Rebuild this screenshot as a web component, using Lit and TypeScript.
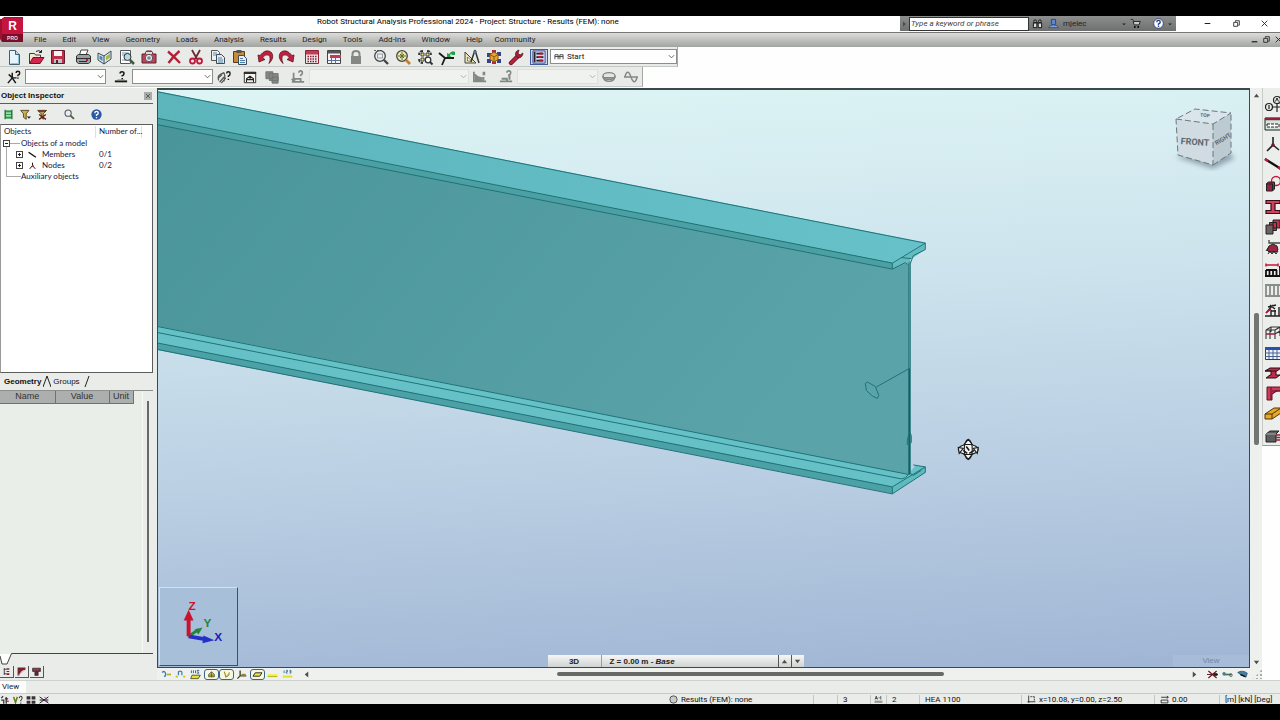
import { LitElement, html, svg, css, nothing } from "lit";
import { customElement, property } from "lit/decorators.js";

const K = "#1a1a1a";
const R = "#c2183c";
const G = "#838785";

const ICONS: Record<string, unknown> = {
  new: svg`<path d="M3.5 1.5h6l4 4v10h-10z" fill="#e6f4fb" stroke="#44606e"/><path d="M9.5 1.5v4h4" fill="#b9d9e8" stroke="#44606e"/><path d="M12.5 6v8.500h-8" stroke="#8fc0da" fill="none"/>`,
  open: svg`<path d="M1.500 4.500h5l1 1.500h5v8h-11z" fill="#f4ead0" stroke="#5c3030"/><path d="M1.500 14.500l3.500-6h11l-4 6z" fill="#d3264c" stroke="#70142a"/><path d="M8 2.500q3-2 5.500.5m0-2v2.500h-2.500" fill="none" stroke="#222"/>`,
  save: svg`<path d="M1.500 1.500h13v13h-13z" fill="#c0304c" stroke="#5e1c2c"/><path d="M4 2h8v5h-8z" fill="#f4f4f2"/><path d="M4 10h8v4h-8z" fill="#b9c4c8"/><path d="M6 11h2v3h-2z" fill="#5e1c2c"/>`,
  print: svg`<path d="M4.500 6l1.500-5h7l-2 5z" fill="#fff" stroke="#444"/><path d="M1.500 7l2-1.500h10l2 1.500v6l-2 1.500h-10l-2-1.500z" fill="#97a0a2" stroke="#333"/><path d="M2 9.500h13M4 12.500h8" stroke="#38292f"/><path d="M11 11h2" stroke="${R}" stroke-width="2"/>`,
  book: svg`<path d="M1 4l6 3 7-5v8l-7 5-6-4z" fill="#d9e7ee" stroke="#3a4a56"/><path d="M7 7v8" stroke="#3a4a56"/><path d="M2.500 6.500l3 1.500v4l-3-2z" fill="#4c86b4"/><path d="M9 7.500l4-3v4l-4 3z" fill="#a5b944"/>`,
  preview: svg`<path d="M1.500 1.500h10v13h-10z" fill="#fff" stroke="#555"/><path d="M3 4h7M3 6h3M3 11h4" stroke="#6b93b1"/><circle cx="8.500" cy="8" r="3.500" fill="#b7dbe0" stroke="#333"/><path d="M11 11l4 4" stroke="#3e5a3a" stroke-width="2.500"/>`,
  camera: svg`<path d="M1 5h3l1.500-3h5l1.500 3h3v9h-14z" fill="#bf4258" stroke="#5b2430"/><path d="M5 3h6v2h-6z" fill="#ddd"/><circle cx="8" cy="9" r="3.700" fill="#e5e9ec" stroke="#555"/><circle cx="8" cy="9" r="1.800" fill="#6b8799"/>`,
  cross: svg`<path d="M2 2.500q6 5 12 11.500M13.500 2q-6 5-11 12" stroke="#b51f38" stroke-width="2.300" fill="none"/>`,
  cut: svg`<path d="M4 1l5 9M12 1l-5 9" stroke="#6b2a34" stroke-width="1.800"/><circle cx="4.500" cy="12" r="2.500" fill="none" stroke="${R}" stroke-width="1.800"/><circle cx="11.500" cy="12" r="2.500" fill="none" stroke="${R}" stroke-width="1.800"/>`,
  copy: svg`<path d="M1.500 1.500h6l2 2v8h-8z" fill="#eef2f3" stroke="#555"/><path d="M6.500 5.500h5l3 3v6h-8z" fill="#dfe9ee" stroke="#3b4d5a"/><path d="M8 9h4M8 11h5M8 13h5M3 4h4M3 6h3" stroke="#5d87a8"/>`,
  paste: svg`<path d="M1.500 2.500h11v11h-11z" fill="#c88a35" stroke="#5a3d14"/><path d="M4.500 1h5v3h-5z" fill="#555"/><path d="M6.500 6.500h5l3 3v6h-8z" fill="#e6eef2" stroke="#3b4d5a"/><path d="M8 9.500h3M8 11.500h5M8 13.500h5" stroke="#4f7fa8"/>`,
  undo: svg`<path d="M1 6l1 7 6-2.500-2.500-1.500q2.500-4.500 6-3 3 2 .5 8.500 6-6 2.500-11-5.500-4.500-11.500 3z" fill="#c3203f" stroke="#5e1424" stroke-width=".8"/>`,
  redo: svg`<path d="M15 6l-1 7-6-2.500 2.500-1.500q-2.500-4.500-6-3-3 2-.5 8.500-6-6-2.500-11 5.500-4.500 11.500 3z" fill="#c3203f" stroke="#5e1424" stroke-width=".8"/>`,
  calc: svg`<path d="M1.500 1.500h13v13h-13z" fill="#f0e4e6" stroke="#8e2338"/><path d="M2 2h12v3.500h-12z" fill="#c23a54"/><path d="M3.500 7.500h9M3.500 10h9M3.500 12.500h9" stroke="#7b2233" stroke-width="1.500" stroke-dasharray="1.500 1"/>`,
  calctable: svg`<path d="M1.500 1.500h13v13h-13z" fill="#f5f5f5" stroke="#444"/><path d="M2 2h12v2.500h-12z" fill="#555"/><path d="M4 6h11v3h-11z" fill="#c23a54"/><path d="M2 11.500h12M5.500 9v5.500M9.500 9v5.500" stroke="#5d6c98"/>`,
  lock: svg`<path d="M4.500 8v-3q0-3 3.500-3t3.500 3v3" fill="none" stroke="${G}" stroke-width="2"/><path d="M3 7h10v8h-10z" fill="${G}"/>`,
  zoomwin: svg`<path d="M1 1.500h9" stroke="#666" stroke-dasharray="2 1"/><circle cx="7" cy="7" r="5.300" fill="#e8f1f3" stroke="#444" stroke-width="1.300"/><path d="M4.500 5h5v4h-5z" fill="none" stroke="#999"/><path d="M11 11l4 4" stroke="#444" stroke-width="2.400"/>`,
  zoomall: svg`<circle cx="7" cy="7" r="5.300" fill="#efeab0" stroke="#444" stroke-width="1.300"/><path d="M7 3v8M3 7h8M5 5l4 4M9 5l-4 4" stroke="#5b6a2c"/><path d="M11 11l4 4" stroke="#c97c28" stroke-width="2.600"/>`,
  zoomlayout: svg`<path d="M6 2q-4 0-4 4M10 2q4 0 4 4M2 10q0 4 4 4" fill="none" stroke="#333" stroke-width="1.800" stroke-dasharray="3 1"/><path d="M4 4h3v3h-3zM9 4h3v3h-3zM4 9h3v3h-3z" fill="#e6dd7c" stroke="#444"/><circle cx="11" cy="11" r="2.800" fill="#fff" stroke="#333" stroke-width="1.300"/><path d="M13 13l2.500 2.500" stroke="#333" stroke-width="2"/>`,
  rotate: svg`<path d="M0 4l6 5h9M6 9l-3 7M6 9" stroke="${K}" stroke-width="1.800" fill="none"/><path d="M8 8V4l2 1q3-4 6-2v-2v5h-4l1.500-1q-2-.5-2.500 1l1 2z" fill="#25a046"/>`,
  design: svg`<path d="M1 3v11h11z" fill="#ece5ad" stroke="#444"/><path d="M3.500 8v4h4z" fill="#fff" stroke="#666" stroke-width=".8"/><path d="M11 1l-4 12M11 1l4 13" stroke="#333" stroke-width="1.500"/><circle cx="11" cy="3" r="1.700" fill="#59748a"/>`,
  cube: svg`<path d="M1 4h4v4h-4zM11 3h4v4h-4zM1 10h4v4h-4zM11 10h4v4h-4z" fill="#34428c"/><path d="M6 1h4v3h-4zM6 12h4v3h-4z" fill="#b02a40"/><path d="M8 3l4 2.500v5l-4 2.500-4-2.500v-5z" fill="#e8a52c" stroke="#8a5b1b"/><path d="M4 5.500l4 2.500 4-2.500M8 8v5" stroke="#8a5b1b" fill="none"/>`,
  wrench: svg`<path d="M3 14l7-7" stroke="#6d1426" stroke-width="4.400" stroke-linecap="round"/><path d="M3 14l7-7" stroke="#b7233f" stroke-width="2.800" stroke-linecap="round"/><path d="M15 4l-3 2-2-1.500 1-3.500q-4 1-3.500 5l2.500 3q4.500 0 5-5z" fill="#a5203a" stroke="#5a1020" stroke-width=".7"/>`,
  tree: svg`<path d="M3 2v12M5 4h8M5 8h8M5 12h8" stroke="#222" stroke-width="2"/><path d="M9 4h3M7 8h4M9 12h3" stroke="${R}" stroke-width="2.500"/><path d="M1 1h14v14H1z" fill="none" stroke="#33418d"/>`,
  nodeq: svg`<path d="M2 5l4 4h5M6 9l-5 6M6 9v-6M6 9l4 6" stroke="${K}" stroke-width="1.700" fill="none"/><path d="M10.500 3.500q0-2 2-2t2 2-2 2.500v1M12.500 8.500v1.500" stroke="${K}" stroke-width="1.700" fill="none"/>`,
  barq: svg`<path d="M1 13h14" stroke="${K}" stroke-width="2.200"/><path d="M4 11h8" stroke="#bfa545"/><path d="M7 4q0-2 2.200-2t2.200 2-2 2.500v1M9.400 9v1.500" stroke="${K}" stroke-width="1.800" fill="none"/>`,
  handq: svg`<path d="M2 12q-2-5 2-7l4-2M3 14l5-6M5 15l5-6M2 9l4-4M8 3l1 4-1 6" stroke="#555" stroke-width="1.400" fill="none"/><path d="M11 4q0-2 2-2t2 2-2 3v1M13 10v1.500" stroke="${K}" stroke-width="1.600" fill="none"/>`,
  loadwin: svg`<path d="M1.500 2.500h13v12h-13z" fill="#f7f5ee" stroke="#222"/><path d="M1 3.500h14" stroke="#222" stroke-width="2"/><path d="M4 14v-4l4-3 4 3v4M4 11h8M8 7v4" fill="none" stroke="#222" stroke-width="1.200"/>`,
  layers: svg`<path d="M1 2h8v8h-8zM5 4h10v8h-10zM8 8h7v7h-7z" fill="${G}" stroke="#6f7372"/>`,
  loadq: svg`<path d="M1 13.500h14M3 3v10M3 10h8v3M1 10l2 3 2-3" stroke="${G}" stroke-width="2" fill="none"/><path d="M9 3q0-2 2-2t2 2-2 3v1" stroke="${G}" stroke-width="1.800" fill="none"/>`,
  diag: svg`<path d="M1 2v11h14M2 5q4 5 10 4v4" stroke="${G}" stroke-width="2" fill="none"/><path d="M2 6q4 4 9 4v3h-9zM11 2h3v4h-3z" fill="${G}"/>`,
  diag2: svg`<path d="M1 13h14M3 10h6v3M12 6v5" stroke="${G}" stroke-width="2.200" fill="none"/><path d="M9 3q0-2 2.200-2t2.200 2-2 2.500v2" stroke="${G}" stroke-width="1.800" fill="none"/>`,
  bowl: svg`<ellipse cx="8" cy="7" rx="7" ry="4" fill="#e2e5e2" stroke="${G}" stroke-width="1.600"/><path d="M1 7q1 6 7 6t7-6" fill="none" stroke="${G}" stroke-width="1.600"/><path d="M2 9h12" stroke="${G}" stroke-width="2"/>`,
  wave: svg`<path d="M0 8h16M1 8q3-11 7 0t7 0" stroke="${G}" stroke-width="1.700" fill="none"/>`,
  bino: svg`<path d="M3 3h3v4h-3zM10 3h3v4h-3zM2 7h5v7h-5zM9 7h5v7h-5zM7 7h2" fill="#ddd" stroke="#111" stroke-width="1.400"/>`,
  user: svg`<path d="M5 2h6v6l-1 2h-4l-1-2z" fill="#5f86c8" stroke="#1f3f8f" stroke-width="1.300"/><path d="M1 14q1-4 7-4t7 4z" fill="#7fa0d8" stroke="#1f3f8f"/>`,
  cart: svg`<path d="M1 2h3l2 8h7l2-5h-10" fill="#c9c9c9" stroke="#222" stroke-width="1.400"/><circle cx="7" cy="13" r="1.400"/><circle cx="12" cy="13" r="1.400"/>`,
  help: svg`<circle cx="8" cy="8" r="7" fill="#fff" stroke="#26366a" stroke-width="1.200"/><path d="M5.500 6q0-2.500 2.500-2.500t2.500 2.200-2.500 2.800v1.500M8 11v2" fill="none" stroke="#24408c" stroke-width="2"/>`,
  helpblue: svg`<circle cx="8" cy="8" r="7.500" fill="#2b57a4"/><path d="M5.500 6q0-2.500 2.500-2.500t2.500 2.200-2.500 2.800v1.500M8 11.500v2" fill="none" stroke="#fff" stroke-width="2"/>`,
  filterdoc: svg`<path d="M3 2h10v12h-10z" fill="#27984a"/><path d="M4 6h8M4 10h8" stroke="#d9f2d9" stroke-width="1.500"/><path d="M3 1v14M13 1v14" stroke="#145f2c" stroke-width="1.500"/>`,
  funnel: svg`<path d="M1 2h12l-4 5v8l-4-3v-5z" fill="#c8b24a" stroke="#50401a" stroke-width="1.300"/><path d="M10 11h6l-3 3z" fill="#222"/>`,
  funnelx: svg`<path d="M1 2h13l-5 5v8l-3-3v-5z" fill="#b9a34a" stroke="#50401a" stroke-width="1.300"/><path d="M3 8l10 7M13 8l-10 7M2 3h11" stroke="#6b2020" stroke-width="2"/>`,
  find: svg`<circle cx="6" cy="6" r="4.500" fill="#e3eff3" stroke="#556" stroke-width="1.600"/><path d="M9.500 9.500l5 5" stroke="#555c38" stroke-width="2.600"/>`,
  member: svg`<path d="M1 4l13 9" stroke="#111" stroke-width="2.400"/>`,
  node: svg`<path d="M8 3v5l-5 6M8 8l5 6" stroke="#111" stroke-width="1.700" fill="none"/><path d="M7 7h3v3h-3z" fill="${R}"/>`,
  axes: svg`<circle cx="4" cy="11" r="3.500" fill="none" stroke="#222" stroke-width="1.200"/><path d="M4 9v4M7.500 11h9M12 7v9" stroke="#222" stroke-width="1.200"/><circle cx="12" cy="4" r="3.500" fill="none" stroke="#222" stroke-width="1.200"/><path d="M10.500 5.500l1.500-3.500 1.500 3.500" stroke="#222" fill="none"/>`,
  storeys: svg`<path d="M0 2h16v12h-16z" fill="#cfe9de" stroke="#222"/><path d="M0 3h16" stroke="#8e1f3d" stroke-width="2.500"/><path d="M2 8h12v3h-12z" fill="#fff" stroke="#222" stroke-dasharray="3 1"/>`,
  vnode: svg`<path d="M8 1v8l-6 6M8 9l6 5" stroke="#222" stroke-width="1.600" fill="none"/><circle cx="8" cy="9" r="1.800" fill="#6e1830"/>`,
  vbar: svg`<path d="M0 3l16 10" stroke="#111" stroke-width="2.200"/><path d="M0 3l3 2M13 11l3 2" stroke="${R}" stroke-width="2.500"/>`,
  solid: svg`<circle cx="11" cy="5" r="4.500" fill="none" stroke="${R}" stroke-width="1.300"/><path d="M1.500 7.500l2-1.500h6v7l-2 2h-6z" fill="#99223e" stroke="#222"/><path d="M1.500 8h6v7" stroke="#222" fill="none"/>`,
  section: svg`<path d="M1 1.500h14v3h-5v7h5v3h-14v-3h5v-7h-5z" fill="#d2405c" stroke="#331018" stroke-width="1.200"/>`,
  panels: svg`<path d="M8 1h7v8h-7zM4.500 3.500h7v8h-7z" fill="#c2304d" stroke="#222"/><path d="M1 6h7v9h-7z" fill="#6b6263" stroke="#222"/>`,
  support: svg`<path d="M4 1v3h12" stroke="#444" fill="none" stroke-width="1.300"/><path d="M8 5l4 2 1 4-2 2h-7l-2-2 2-4z" fill="#9a2741" stroke="#222"/><path d="M3 15l2-3 2 3 2-3 2 3 2-3M1 12l3-4" fill="none" stroke="#222"/>`,
  loadtype: svg`<path d="M1 3h12M1 1.500v3M13 1.500v3" stroke="${R}" stroke-width="1.500"/><path d="M0 14h16M1 8v6M4.500 8v6M8 8v6M11.500 8v6M1 8h11M15 4v10" stroke="#111" stroke-width="1.800" fill="none"/>`,
  loadgray: svg`<path d="M0 14h16M0 3h16M1 3v11M5 3v11M9 3v11M13 3v11" stroke="#888c8b" stroke-width="1.800"/>`,
  loadwind: svg`<path d="M0 14h16M1 11l7-8M5 3l5 4M3 5l8-2M6 8v6M10 8v6M6 9h5M14 5v9" stroke="#222" stroke-width="1.400"/><path d="M1 11l5-4" stroke="${R}" stroke-width="1.500"/>`,
  frame: svg`<path d="M1 5l5-3h9v9M1 5h9v9M1 5v9M10 5l5-3M1 9h9l5-3M5 5v9M6 2v5" fill="none" stroke="#333" stroke-width="1.100"/><path d="M1 9h9" stroke="${R}"/>`,
  table: svg`<path d="M.5 2.500h15v12h-15z" fill="#eef4fb" stroke="#223a78"/><path d="M0 2h16v3h-16z" fill="#2a4fb0"/><path d="M0 8h16M0 11.500h16M4 5v9M8 5v9M12 5v9" stroke="#49658f"/>`,
  steel: svg`<path d="M0 6l5-3h11l-4 3h-1v4h4l-4 3h-10l4-3h1v-4z" fill="#c22a49" stroke="#2a0d14"/><path d="M0 6h11" stroke="#2a0d14"/>`,
  conn: svg`<path d="M2 2h14v4h-5l-4 3v6h-5z" fill="#cf3858" stroke="#641527"/><path d="M7 6h9M6 2v13M7 9l5-3" stroke="#641527"/>`,
  timber: svg`<path d="M0 9l9-6 7 0v5l-9 6h-7z" fill="#e7a925" stroke="#4d350a"/><path d="M0 9h7v5M7 9l9-6" fill="none" stroke="#4d350a"/>`,
  concrete: svg`<path d="M1 6l4-3h9l-3 3v8h-10z" fill="#5b5e5c" stroke="#222"/><path d="M11 7h5M11 9.500h5M11 12h5" stroke="#8c2338" stroke-width="1.300"/><path d="M1 6h10" stroke="#aaa"/>`,
  v1: svg`<path d="M3 5q4-3 5 1t-2 5" fill="none" stroke="#3e7fae" stroke-width="2"/><path d="M10 8h6" stroke="#b5b020" stroke-width="2.500"/>`,
  v2: svg`<path d="M5 9v-5q5-2 5 1v4" fill="none" stroke="#3e7fae" stroke-width="1.800"/><path d="M1 11h3M12 11h3" stroke="#c8c21a" stroke-width="2.500"/>`,
  v3: svg`<path d="M2 2v4M5 2v4M8 2v4M10 2h3l-2 2 2 2h-3" fill="none" stroke="#2a64a0" stroke-width="1.400"/><path d="M3 9h12l-3 5h-11z" fill="#e8e034" stroke="#222"/>`,
  v4: svg`<path d="M3 8l5-5 5 5v4h-10z" fill="#d8d432" stroke="#333" stroke-width="1.300"/><path d="M4 9h8M8 4v9" stroke="#333"/>`,
  v5: svg`<path d="M4 3l3 9 6-5" fill="none" stroke="#a08c14" stroke-width="2"/><path d="M6 12q6 1 7-8" fill="#efe84a" stroke="#444"/>`,
  v6: svg`<path d="M6 2v9M2 14l4-4M6 10h9" stroke="#4a4620" stroke-width="2"/><path d="M8 7h6v3h-6z" fill="#8b8630"/>`,
  v7: svg`<path d="M4 5h12l-4 6h-12z" fill="#eeea3e" stroke="#1c1c1c" stroke-width="1.600"/>`,
  v8: svg`<path d="M1 11h14" stroke="#a9a518" stroke-width="1.500"/><path d="M1 9h14" stroke="#f2ee48" stroke-width="3"/>`,
  v9: svg`<path d="M3 2v4M6 2h2v2h-2v2h2M11 2h2v4h-2M11 4h2" fill="none" stroke="#2a64a0" stroke-width="1.200"/><path d="M1 11h14" stroke="#e3de32" stroke-width="3"/>`,
  w1: svg`<path d="M2 3l12 10M14 3l-12 10M0 8h16" stroke="#6d1c28" stroke-width="1.800"/><path d="M10 6h5v4h-5z" fill="#222"/>`,
  w2: svg`<path d="M2 8h12" stroke="#475" stroke-width="2.500"/><circle cx="3" cy="7" r="2.500" fill="#4e7b8f"/><circle cx="13" cy="9" r="2" fill="none" stroke="#444"/>`,
  w3: svg`<path d="M1 5q7-4 14 1l-2 6-8-4z" fill="#3f83ad" stroke="#24455c"/><path d="M5 8l7 3" stroke="#111" stroke-width="2"/>`,
  mgr: svg`<path d="M4 2v12M4 4h4M4 12h4" stroke="#222" stroke-width="1.500" fill="none"/><path d="M8 2h5v3h-5zM8 7h5v2h-5zM8 11h5v3h-5z" fill="#8a1f38"/>`,
  tri: svg`<path d="M1 1h14v4q-9 1-11 10h-3z" fill="#7c1f30"/><path d="M1 15l13-9" stroke="#c9a0a6"/>`,
  tee: svg`<path d="M1 2h14v6h-4v7h-6v-7h-4z" fill="#6c2230" stroke="#222"/><path d="M3 5h10" stroke="#d9b0b6" stroke-dasharray="2 1"/>`,
  s1: svg`<path d="M2 5l3-3M2 8h4v6M10 3v11M8 6h5" stroke="#333" stroke-width="2" fill="none"/><path d="M9 10h5" stroke="${R}" stroke-width="2"/>`,
  s2: svg`<path d="M1 3l3 9 3-9" stroke="#6b7a1a" stroke-width="2.500" fill="none"/><path d="M10 5q0-3 2.500-3t2 3-2 3v2M12.500 12v2" stroke="#222" stroke-width="1.500" fill="none"/>`,
  s3: svg`<path d="M1 2h6v5h-6zM9 2h6v5h-6zM1 9h6v5h-6zM9 9h6v5h-6z" fill="#333"/><path d="M10 4h4M2 11h4" stroke="#a04" stroke-width="1.500"/>`,
  s4: svg`<path d="M1 3l14 10M15 3l-14 10M1 8h14" stroke="#222" stroke-width="1.600"/><path d="M9 3l5 9" stroke="#a04aa0" stroke-width="1.500"/>`,
  dim: svg`<path d="M2 4h12M12 2l3 2-3 2M2 9h12v5h-12z" fill="none" stroke="#222" stroke-width="1.500"/>`,
  coord: svg`<path d="M3 1v13M1 12h14" fill="none" stroke="#222" stroke-width="1.500"/><path d="M6 3h8M13 3v8" fill="none" stroke="#222" stroke-width="1.400" stroke-dasharray="3 1"/>`,
  ai: svg`<path d="M2 8l2-6 2 6M3 6h3M8 5h2M12 2v6" stroke="#222" stroke-width="1.300" fill="none"/><path d="M1 10h14v4h-14z" fill="#999"/>`,
  ball: svg`<circle cx="8" cy="8" r="6.500" fill="#c9ccca" stroke="#4a4d4b" stroke-width="1.600"/>`,
  min: svg`<path d="M3 8h10" stroke="#222" stroke-width="1.800"/>`,
  mdimin: svg`<path d="M3 12h10" stroke="#222" stroke-width="2.200"/>`,
  restore: svg`<path d="M3 6h7v7h-7zM6 5v-2h7v8h-2" fill="none" stroke="#222" stroke-width="1.500"/>`,
  close: svg`<path d="M3 3l10 10M13 3l-10 10" stroke="#222" stroke-width="1.600"/>`,
  up: svg`<path d="M2 12l6-8 6 8z" fill="#4a4f4c"/>`,
  down: svg`<path d="M2 4l6 8 6-8z" fill="#4a4f4c"/>`,
  left: svg`<path d="M12 1v14l-8-7z" fill="#4a4f4c"/>`,
  right: svg`<path d="M4 1v14l8-7z" fill="#4a4f4c"/>`,
  tick: svg`<path d="M5 7l3 3 3-3z" fill="#222"/>`,
  chev: svg`<path d="M2 5l6 6 6-6" fill="none" stroke="currentColor" stroke-width="2"/>`,
  startico: svg`<path d="M2 14V4h7M2 8h18M9 4v10M13 14V4h7M20 4v10" fill="none" stroke="#333" stroke-width="1.800"/>`,
};

const glyph = (name: string) => html`<svg class="glyph" viewBox="0 0 16 16" aria-hidden="true">${ICONS[name]}</svg>`;

const tool = (name: string, cls = "") =>
  html`<button class="tool ${cls}" type="button" aria-label=${name}>${glyph(name)}</button>`;

const baseStyles = css`
  :host, * { box-sizing: border-box; }
  button, input, select, a {
    font: inherit; color: inherit; margin: 0; padding: 0;
    border: 0; background: none; border-radius: 0; text-decoration: none;
  }
  button { display: flex; align-items: center; justify-content: center; }
  .glyph { display: block; width: 100%; height: 100%; overflow: visible; }
`;

@customElement("combo-box")
class ComboBox extends LitElement {
  @property() label = "";
  @property() value = "";
  @property({ type: Boolean, reflect: true }) disabled = false;
  static styles = [baseStyles, css`
    :host { display: flex; position: relative; height: 15px; }
    select {
      appearance: none; width: 100%; height: 100%; padding-left: 4px;
      background: #fdfefd; border: 1px solid #8a8f8c; font: 8px Roboto, sans-serif; color: #111;
    }
    .icon { padding-left: 16px; }
    .chev { position: absolute; right: 2px; top: 4px; width: 7px; height: 7px; color: #555; pointer-events: none; }
    .mark { position: absolute; left: 4px; top: 4px; width: 10px; height: 8px; pointer-events: none; }
    :host([disabled]) select { background: #eff2ef; border-color: #dde1de; opacity: 1; }
    :host([disabled]) .chev { color: #a4a9a6; }
  `];
  render() {
    return html`<select class=${this.value ? "icon" : ""} aria-label=${this.label} ?disabled=${this.disabled}>
        <option>${this.value}</option></select>
      ${this.value ? html`<svg class="mark" viewBox="0 2 22 14">${ICONS.startico}</svg>` : nothing}
      <span class="chev">${glyph("chev")}</span>`;
  }
}

@customElement("object-inspector")
class ObjectInspector extends LitElement {
  static styles = [baseStyles, css`
    :host {
      display: flex; flex-direction: column; width: 157px; background: #e9ece8;
      font: 8px/11px Lato, "Liberation Sans", sans-serif; color: #111;
    }
    header { display: flex; align-items: center; justify-content: space-between; height: 15px; padding: 0 5px 0 1px; }
    h2 { margin: 0; font: bold 8px/11px "Liberation Sans", sans-serif; }
    .close { width: 8px; height: 8px; padding: 1px; background: #a9adaa; }
    .bar { display: flex; align-items: center; gap: 6px; height: 21px; padding: 0 3px; margin-right: 4px; border-top: 1px solid #5a5d5b; }
    .tool { width: 11px; height: 11px; }
    .gap { margin-left: 10px; }
    .tree {
      flex: 247 1 0; min-height: 0; margin-right: 4px; background: #fefffe; color: #16163c;
      border: 1px solid #5a5d5b; border-left-color: #999; padding-top: 1px;
    }
    .row { display: grid; grid-template-columns: 98px 1fr; }
    .head { height: 12px; padding-left: 3px; grid-template-columns: 91px 47px; }
    .head span + span { border-left: 1px solid #dde; border-right: 1px solid #dde; padding-left: 3px; white-space: nowrap; }
    .node { display: flex; align-items: center; height: 11px; white-space: nowrap; }
    .l1 { padding-left: 20px; }
    .l2 { padding-left: 15px; }
    .leaf { width: 9px; height: 9px; margin: 0 5px; }
    .box { width: 7px; height: 7px; background: #fff; border: 1px solid #444; position: relative; }
    .box::before { content: ""; position: absolute; left: 1px; right: 1px; top: 2px; height: 1px; background: #222; }
    .plus::after { content: ""; position: absolute; top: 1px; bottom: 1px; left: 2px; width: 1px; background: #222; }
    .root { position: relative; }
    .root .box { position: absolute; left: 2px; top: 2px; }
    .root::before { content: ""; position: absolute; left: 9px; top: 5px; width: 10px; height: 33px; border-top: 1px solid #aaa; }
    .root::after { content: ""; position: absolute; left: 5px; top: 9px; width: 14px; height: 29px; border: 1px solid #aaa; border-width: 0 0 1px 1px; }
    .tabs { display: flex; align-items: center; height: 17px; padding-left: 4px; }
    .tabs button { height: 12px; }
    .on, .off { font: 8px/12px "Liberation Sans", sans-serif; }
    .on { font-weight: bold; }
    .slash { width: 8px; height: 11px; margin: 0 2px; }
    .props { flex: 263 1 0; min-height: 0; display: flex; border-top: 1px solid #8c908d; margin-right: 4px; }
    .grid { flex: 1; background: #e9eee9; }
    table { border-collapse: collapse; table-layout: fixed; width: 133px; font: 9px/11px "Liberation Sans", sans-serif; color: #333; }
    th { height: 12px; padding: 0; line-height: 11px; font-weight: normal; background: #acafad; border-right: 1px solid #6e7270; border-bottom: 1px solid #6e7270; }
    .n { width: 55px; } .v { width: 54px; } .u { width: 24px; }
    .track { width: 11px; padding: 10px 4px 11px; border-left: 1px solid #f6f8f6; }
    .thumb { width: 2px; height: 100%; background: #666966; }
    .sheet { height: 13px; margin-right: 4px; }
    .sheet svg { display: block; width: 100%; height: 13px; }
    .foot { display: flex; gap: 1px; height: 14px; padding-bottom: 1px; }
    .foot button { width: 14px; height: 12px; padding: 1px 2px; border: 1px solid #555; border-width: 0 1px 1px 0; }
  `];
  private branch(icon: string, label: string, count: string) {
    return html`<div class="row"><span class="node l2"><i class="box plus"></i><span class="leaf">${glyph(icon)}</span>${label}</span><span>${count}</span></div>`;
  }
  render() {
    return html`
      <header><h2>Object Inspector</h2><button class="close" aria-label="Close">${glyph("close")}</button></header>
      <div class="bar">${tool("filterdoc")}${tool("funnel")}${tool("funnelx")}${tool("find", "gap")}${tool("helpblue", "gap")}</div>
      <div class="tree">
        <div class="row head"><span>Objects</span><span>Number of...</span></div>
        <div class="row root"><span class="node l1"><i class="box"></i>Objects of a model</span></div>
        ${this.branch("member", "Members", "0/1")}
        ${this.branch("node", "Nodes", "0/2")}
        <div class="row"><span class="node l1">Auxiliary objects</span></div>
      </div>
      <div class="tabs">
        <button class="on">Geometry</button>
        <svg class="slash" viewBox="0 0 8 11"><path d="M0 11L4 0l4 11" fill="none" stroke="#222"/></svg>
        <button class="off">Groups</button>
        <svg class="slash" viewBox="0 0 8 11"><path d="M3 11L7 0" fill="none" stroke="#222"/></svg>
      </div>
      <div class="props">
        <div class="grid"><table><thead><tr><th class="n">Name</th><th class="v">Value</th><th class="u">Unit</th></tr></thead></table></div>
        <div class="track"><div class="thumb"></div></div>
      </div>
      <div class="sheet"><svg viewBox="0 0 153 13" preserveAspectRatio="xMinYMin slice"><path d="M0 1l3 10h4l4-10z" fill="#fff"/><path d="M0 3l2 8h5L11.500.5H153" fill="none" stroke="#444"/></svg></div>
      <div class="foot">${["mgr", "tri", "tee"].map((n) => tool(n))}</div>`;
  }
}

@customElement("model-view")
class ModelView extends LitElement {
  static styles = [baseStyles, css`
    :host {
      display: block; position: relative; overflow: hidden;
      border: solid #3a4a4c; border-width: 2px 1px 1px 1px;
      background: linear-gradient(177deg, #def5f5 0%, #cfe5ee 32%, #b9cee2 66%, #9fb5d4 100%);
      font: 8px/11px "Liberation Sans", Arial, sans-serif;
    }
    .scene { position: absolute; inset: 0; width: 100%; height: 100%; }
    .cube { position: absolute; right: 11px; top: 14px; width: 70px; height: 70px; }
    .triad { position: absolute; left: 1px; bottom: 1px; width: 79px; height: 79px; border: 1px solid #d3e0ee; border-right-color: #3e5064; border-bottom-color: #3e5064; background: #a8bfd9; }
    .triad svg { display: block; width: 100%; height: 100%; }
    .level { position: absolute; left: calc(50% - 156px); bottom: 0; display: flex; height: 12px; width: 256px; background: linear-gradient(#f6f7f6, #cfd3d2); font-weight: bold; color: #222; }
    .level > * { display: flex; align-items: center; white-space: pre; }
    .mode { width: 54px; justify-content: center; border-right: 1px solid #9a9f9d; }
    .plane { flex: 1; padding-left: 8px; }
    .level button { width: 13px; padding: 3px; border-left: 1px solid #555; }
    .level .glyph { width: 7px; height: 7px; flex: none; }
    .tag { position: absolute; right: 0; bottom: 0; width: 76px; height: 12px; text-align: center; color: #7488a4; background: #a6bcd9; }
  `];
  render() {
    const e = "#1f7277";
    return html`
      <svg class="scene" viewBox="158 90 1092 578" preserveAspectRatio="xMidYMid slice" aria-label="Beam model">
        <defs>
          <linearGradient id="web" x1="0" x2="1" y1="0" y2=".4"><stop offset="0" stop-color="#4a9599"/><stop offset="1" stop-color="#59a3a9"/></linearGradient>
          <linearGradient id="top" x1="0" x2="1"><stop offset="0" stop-color="#5db5bc"/><stop offset="1" stop-color="#66c1c8"/></linearGradient>
        </defs>
        <path d="M158 119L893 263L911 261V477L905 479L158 335z" fill="url(#web)"/>
        <path d="M150 325L909 475L916 466L926 467L926 473L893 494L150 348z" fill="#65c1c6"/>
        <path d="M150 342L893 487V494L150 349z" fill="#4ba1a5"/>
        <path d="M893 487L926 467V473L893 494z" fill="#5fbabd"/>
        <path d="M150 90L926 243L893 263L150 117z" fill="url(#top)"/>
        <path d="M150 117L893 263V269L150 123z" fill="#4ba0a3"/>
        <path d="M893 263L926 243V250L911 260L909 263L893 269z" fill="#63bcc0"/>
        <g fill="none" stroke="${e}" stroke-width="1">
          <path d="M150 90.500L926 243.500V250L914 256L911 264M150 117L893 263.500L926 243.500M150 123.500L893 269.500V263.500M893 269.500L906 263L908 265M902 258L912 259"/>
          <path d="M909.500 264V475M911 263V475" stroke-width=".9"/>
          <path d="M150 325.500L909 475M150 331.500L902 479.500Q907 479 909 475M150 342L893 487.500L926 467.500V473L893 494.500V487.500M150 348.500L893 494.500M914 465.500L926 467.500M911 474L914 476L922 471"/>
          <path d="M910 369L877 387.500M866 384L868 382.500L876 387L879.500 396L878 399L873 396.500L867 391z"/>
          <path d="M910 369V475" stroke="#135a60" stroke-width="1.200"/>
          <path d="M910 432l2 4v7l-2 2h-2v-4z"/>
        </g>
        <g transform="translate(969 450)" fill="#f4f6f4" stroke="#1a1a1a" stroke-width="1.100">
          <ellipse rx="10" ry="5"/><ellipse rx="4" ry="10"/>
          <path d="M-4-5L0-10L4-5zM-9 4l-1-6 5 1zM9 4l1-6-5 1zM-4 5l4 5 4-5z"/>
          <path d="M-5 1l4 3M1 4l5-3M-2-3l3 4" stroke-width="1.600"/>
        </g>
      </svg>
      <svg class="cube" viewBox="1168 104 70 70" aria-label="View cube">
        <defs><filter id="soft"><feGaussianBlur stdDeviation="2.500"/></filter></defs>
        <path d="M1175 157L1213 169L1235 158L1225 150z" fill="#92a5b0" filter="url(#soft)"/>
        <path d="M1176 119L1195 109L1231 113L1213 124z" fill="#d9e5ea"/>
        <path d="M1176 119L1213 124V165L1178 155z" fill="#d0dbe2"/>
        <path d="M1213 124L1231 113V153L1213 165z" fill="#bccad2"/>
        <path d="M1176 119L1213 124L1231 113L1195 109zM1213 124V165L1178 155L1176 119M1213 165L1231 153V113" fill="none" stroke="#6a777f" stroke-dasharray="6 3"/>
        <g fill="#5d6971" font-family="Roboto, Arial, sans-serif" font-weight="bold" text-anchor="middle">
          <text x="1195" y="145" font-size="9" transform="rotate(4 1195 142)">FRONT</text>
          <text x="1223" y="141" font-size="6" transform="rotate(-32 1223 139)">RIGHT</text>
          <text x="1205" y="117" font-size="5" transform="rotate(6 1205 116)">TOP</text>
        </g>
      </svg>
      <div class="triad"><svg viewBox="160 588 78 78" aria-label="Axes">
        <path d="M189 637L199 630" stroke="#24853d" stroke-width="3"/><path d="M203 628l-4 7-4-5z" fill="#24853d"/>
        <path d="M189 637L207 640" stroke="#2230c8" stroke-width="4"/><path d="M215 641l-12 3 1-8z" fill="#2230c8"/>
        <path d="M189 637V618" stroke="#c8142e" stroke-width="4"/><path d="M184 621l5-11 5 11z" fill="#c8142e"/>
        <g font-family="Liberation Sans, Arial, sans-serif" font-weight="bold" font-size="12">
          <text x="189" y="610" fill="#c8142e">Z</text><text x="204" y="628" fill="#24853d">Y</text><text x="215" y="642" fill="#1e1eb8">X</text>
        </g></svg></div>
      <div class="level"><span class="mode">3D</span><span class="plane">Z = 0.00 m - <i>Base</i></span>${tool("up")}${tool("down")}</div>
      <div class="tag">View</div>`;
  }
}

@customElement("app-root")
class AppRoot extends LitElement {
  static styles = [baseStyles, css`
    :host {
      display: flex; flex-direction: column; height: 100vh; padding: 16px 0; overflow: hidden;
      background: #000; color: #1c1c1c; font: 8px/11px Roboto, "Noto Sans", sans-serif;
    }
    .title { position: relative; display: flex; align-items: flex-start; height: 16px; background: #fff; }
    h1 { flex: 1; margin: 0; padding-left: 317px; font: 8px/11px Roboto, sans-serif; color: #000; white-space: nowrap; }
    .logo { position: absolute; z-index: 1; left: 0; top: 1px; width: 24px; height: 26px; }
    .info { display: flex; align-items: center; width: 276px; height: 15px; background: linear-gradient(#8d8f8e, #6e706f); }
    .arrow { width: 9px; height: 8px; padding: 1px; }
    .search { width: 120px; height: 14px; padding: 0 1px; background: #fff; border: 1px solid #333; font-style: italic; }
    .search::placeholder { color: #444; opacity: 1; }
    .info .tool { width: 11px; height: 11px; }
    .info .bino { margin: 0 5px 0 3px; }
    .who { flex: 1; padding-left: 4px; text-align: left; justify-content: flex-start; }
    .caret { width: 12px; height: 10px; padding: 0 1px; }
    .win { display: flex; width: 104px; height: 15px; align-items: center; padding: 0 1px 0 17px; }
    .win .tool { width: 30px; height: 12px; padding: 2px; }
    .win .glyph { width: 9px; height: 9px; }
    .menu { display: flex; align-items: flex-start; height: 15px; padding: 1px 0 0 34px; gap: 16px; border-top: 1px solid #777; background: linear-gradient(#dcdcda, #a2a4a2); color: #222; }
    .menu .tight { margin-left: -4px; }
    .mdi { display: flex; margin: 1px -4px 0 auto; }
    .mdi .tool { width: 11px; height: 9px; margin-left: 1px; }
    .bars { background: #fdfefd; height: 41px; }
    .strip { display: flex; align-items: center; width: max-content; height: 20px; background: #e8ebe7; border-right: 1px solid #a5a9a6; border-bottom: 1px solid #c4c8c5; }
    .main { gap: 7px; padding-left: 5px; }
    .group { display: flex; gap: 4px; }
    .strip .tool { width: 18px; height: 16px; padding: 0 1px; }
    .strip .pressed { border: 1px solid #3f5a9c; background: #cfd9ee; margin-left: -2px; }
    .start { width: 127px; margin-left: -5px; }
    .second { padding-left: 3px; }
    .second .tool { margin: 0 2px; padding: 1px; }
    .second .sp { margin-left: 6px; }
    .c1 { width: 81px; } .c2 { width: 160px; }
    .work { flex: 1; min-height: 0; display: flex; background: #e9ece8; }
    .doc { flex: 1; min-width: 0; display: grid; grid-template: 1fr 12px / 1fr 12px; }
    .vscroll { display: flex; flex-direction: column; align-items: center; padding: 4px 0 2px; background: #edf0ed; }
    .vscroll .tool, .hscroll .arr { width: 7px; height: 7px; flex: none; }
    .lane { flex: 1; display: flex; flex-direction: column; }
    .lane::before { content: ""; flex: 214; }
    .lane::after { content: ""; flex: 214; }
    .vthumb { flex: 131; width: 5px; border-radius: 2px; background: #727672; }
    .hscroll { grid-column: 1 / -1; display: flex; align-items: center; background: #eef1ee; }
    .vt { display: flex; padding-left: 1px; }
    .vt .tool { width: 15px; height: 11px; padding: 0 2px; border-radius: 3px; }
    .vt .tool:nth-child(3n) { margin-right: 1px; }
    .vt .on { border: 1px solid #3c6488; background: #f6f8e4; }
    .hlane { flex: 1; display: flex; }
    .hlane::before { content: ""; flex: 241; }
    .hlane::after { content: ""; flex: 240; }
    .hthumb { flex: 387; height: 4px; border-radius: 2px; background: #656a66; }
    .hscroll .arr { margin: 0 6px 0 7px; }
    .grip { width: 11px; height: 10px; background: radial-gradient(circle, #aaa 1px, transparent 1px) 0 0 / 4px 4px; clip-path: polygon(100% 0, 100% 100%, 20% 100%); }
    .side { width: 18px; background: #fdfefd; overflow: hidden; }
    .sidebox { display: flex; flex-direction: column; gap: 7px; padding: 8px 0 1px 2px; background: #eceeeb; border-left: 1px solid #c8cbc8; border-bottom: 1px solid #999; }
    .sidebox .set { display: flex; flex-direction: column; gap: 4px; }
    .sidebox .tool { width: 16px; height: 16px; }
    .views { display: flex; height: 13px; background: #e9ece8; border-top: 1px solid #cfd3cf; }
    .views a { width: 26px; padding-left: 2px; line-height: 12px; background: #fbfcfb; }
    .status { display: flex; height: 11px; padding-top: 1px; overflow: hidden; background: #e9ece8; border-top: 1px solid #c7cbc7; line-height: 9px; color: #111; }
    .quick { display: flex; gap: 3px; flex: 668; }
    .quick .tool { width: 10px; height: 10px; }
    .cell { display: flex; gap: 3px; padding-left: 5px; border-left: 1px solid #c3c7c3; white-space: nowrap; }
    .cell .ic { width: 9px; height: 9px; }
    .result { flex: 145; border: 0; }
    .w24 { width: 24px; } .w33 { width: 33px; } .w16 { width: 16px; padding-left: 3px; } .w102 { width: 102px; }
    .w133 { width: 133px; } .w65 { width: 65px; } .w61 { width: 61px; }
  `];

  private menus = ["File", "Edit", "View", "Geometry", "Loads", "Analysis", "Results", "Design", "Tools", "Add-Ins", "Window", "Help", "Community"];
  private groups = [
    ["new", "open", "save"], ["print", "book", "preview", "camera"], ["cross", "cut", "copy", "paste"],
    ["undo", "redo"], ["calc", "calctable", "lock"], ["zoomwin", "zoomall", "zoomlayout", "rotate"], ["design", "cube", "wrench"],
  ];
  private side = [
    ["axes", "storeys", "vnode", "vbar", "solid"], ["section", "panels", "support"],
    ["loadtype", "loadgray", "loadwind"], ["frame", "table", "steel", "conn", "timber"], ["concrete"],
  ];

  render() {
    return html`
      <div class="title">
        <svg class="logo" viewBox="0 0 24 26" aria-label="Robot Pro">
          <path d="M0 2h2l2-2h19v25H2l-2-3z" fill="#a0102f"/><path d="M2 1h21v16H2z" fill="#c41440"/><path d="M2 17h21v8H2z" fill="#7c0d26"/>
          <text x="12.500" y="13" font-family="Liberation Sans, sans-serif" font-weight="bold" font-size="12" fill="#fff" text-anchor="middle">R</text>
          <text x="12.500" y="23" font-family="Liberation Sans, sans-serif" font-weight="bold" font-size="5" fill="#f3d6dc" text-anchor="middle">PRO</text>
        </svg>
        <h1>Robot Structural Analysis Professional 2024 - Project: Structure - Results (FEM): none</h1>
        <div class="info">
          <span class="arrow">${glyph("right")}</span>
          <input class="search" type="search" aria-label="Search" placeholder="Type a keyword or phrase">
          ${tool("bino", "bino")}${tool("user")}
          <button class="who">mjelec</button><span class="caret">${glyph("tick")}</span>
          ${tool("cart")}<span class="caret"></span>${tool("help")}<span class="caret">${glyph("tick")}</span>
        </div>
        <div class="win">${tool("min")}${tool("restore")}${tool("close")}</div>
      </div>
      <nav class="menu">
        ${this.menus.map((m, i) => html`<a href="#" class=${i === 12 ? "tight" : ""}>${m}</a>`)}
        <span class="mdi">${tool("mdimin")}${tool("restore")}${tool("close")}</span>
      </nav>
      <div class="bars">
        <div class="strip main">
          ${this.groups.map((g) => html`<div class="group">${g.map((n) => tool(n))}</div>`)}
          ${tool("tree", "pressed")}
          <combo-box class="start" label="Layout" value="Start"></combo-box>
        </div>
        <div class="strip second">
          ${tool("nodeq")}<combo-box class="c1" label="Nodes"></combo-box>
          ${tool("barq", "sp")}<combo-box class="c1" label="Bars"></combo-box>
          ${tool("handq")}${tool("loadwin", "sp")}${tool("layers")}${tool("loadq", "sp")}
          <combo-box class="c2" label="Load case" disabled></combo-box>
          ${tool("diag")}${tool("diag2", "sp")}
          <combo-box class="c1" label="Mode" disabled></combo-box>
          ${tool("bowl")}${tool("wave")}
        </div>
      </div>
      <div class="work">
        <object-inspector></object-inspector>
        <div class="doc">
          <model-view></model-view>
          <div class="vscroll">${tool("up")}<div class="lane"><div class="vthumb"></div></div>${tool("down")}</div>
          <div class="hscroll">
            <div class="vt">${[1, 2, 3, 4, 5, 6, 7, 8, 9].map((n) => tool("v" + n, [4, 5, 7].includes(n) ? "on" : ""))}</div>
            ${tool("left", "arr")}
            <div class="hlane"><div class="hthumb"></div></div>
            ${tool("right", "arr")}
            <div class="vt">${["w1", "w2", "w3"].map((n) => tool(n))}</div>
            <span class="grip"></span>
          </div>
        </div>
        <aside class="side"><div class="sidebox">
          ${this.side.map((g) => html`<div class="set">${g.map((n) => tool(n))}</div>`)}
        </div></aside>
      </div>
      <div class="views"><a href="#">View</a></div>
      <footer class="status">
        <div class="quick">${["s1", "s2", "s3", "s4"].map((n) => tool(n))}</div>
        <div class="cell result"><span class="ic">${glyph("ball")}</span>Results (FEM): none</div>
        <div class="cell w24"></div>
        <div class="cell w33">3</div>
        <div class="cell w16"><span class="ic">${glyph("ai")}</span></div>
        <div class="cell w33">2</div>
        <div class="cell w102">HEA 1100</div>
        <div class="cell w133"><span class="ic">${glyph("coord")}</span>x=10.08, y=0.00, z=2.50</div>
        <div class="cell w65"><span class="ic">${glyph("dim")}</span>0.00</div>
        <div class="cell w61">[m] [kN] [Deg]</div>
      </footer>`;
  }
}
